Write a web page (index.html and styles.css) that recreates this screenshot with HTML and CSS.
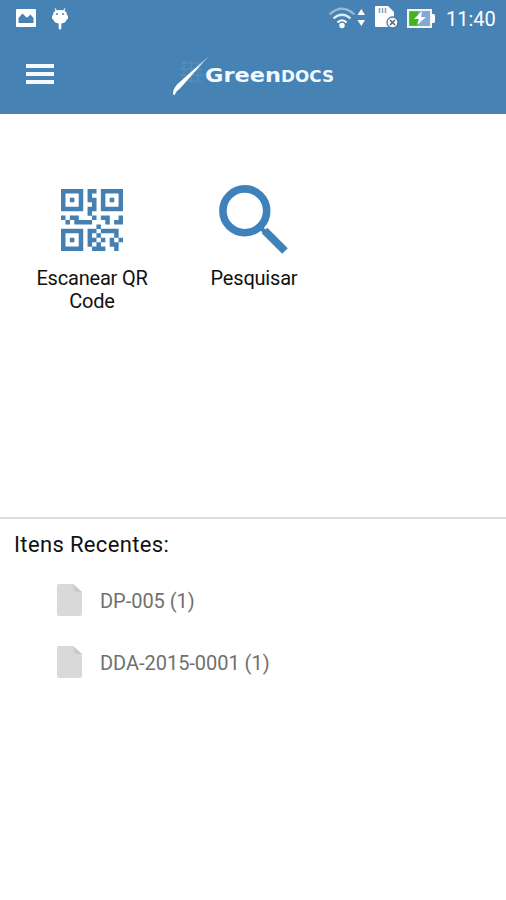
FILE: index.html
```html
<!DOCTYPE html>
<html lang="pt-BR">
<head>
    <meta charset="UTF-8">
    <meta name="viewport" content="width=device-width, initial-scale=1.0">
    <title>Greendocs</title>
    <link rel="stylesheet" href="styles.css">
</head>
<body>
    <header class="header">
        <div class="status-bar">
            <svg class="icon-picture" width="20" height="18" viewBox="0 0 20 18">
                <path fill="#fff" fill-rule="evenodd" d="M1 0H19Q20 0 20 1V17Q20 18 19 18H1Q0 18 0 17V1Q0 0 1 0ZM2.500 14H17.500V9L14.500 5.500L12.500 7.500L10.500 8.500L6.500 4.500L2.500 9Z"/>
            </svg>
            <svg class="icon-robot" width="16" height="22" viewBox="0 0 16 22">
                <path d="M3 0.500L5 4M13 0.500L11 4" stroke="#fff" stroke-width="1.200"/>
                <path fill="#fff" d="M1 7Q1 2 8 2T15 7L16 8V11H15Q14 15 9.300 15.500V20Q9.300 21.500 8 21.500T6.700 20V15.500Q2 15 1 11H0V8Z"/>
                <circle cx="5" cy="6" r="1" fill="#4682b4"/>
                <circle cx="11" cy="6" r="1" fill="#4682b4"/>
            </svg>
            <div class="status-right">
                <svg class="icon-wifi" width="38" height="22" viewBox="0 0 38 22">
                    <g fill="none" stroke="#fff" stroke-width="2.200">
                        <path d="M0.500 7.500Q13 -4 25.500 7.500" opacity="0.450"/>
                        <path d="M4.500 11.500Q13 4 21.500 11.500" opacity="0.850"/>
                        <path d="M8.500 15.500Q13 11 17.500 15.500"/>
                    </g>
                    <circle cx="13" cy="18.500" r="2.700" fill="#fff"/>
                    <path fill="#fff" d="M28.500 8L32.300 2L36 8ZM28.500 13H36L32.300 19Z"/>
                </svg>
                <svg class="icon-sd" width="24" height="23" viewBox="0 0 24 23">
                    <path fill="#fff" d="M1 0H13L19 6V21H1Q0 21 0 20V1Q0 0 1 0Z"/>
                    <path d="M4.500 2V7M7.500 2V7M10.500 2V7" stroke="#7fa4c4" stroke-width="1.500"/>
                    <circle cx="17.500" cy="16.500" r="5.500" fill="#fff" stroke="#4e7697" stroke-width="1.300"/>
                    <path d="M15 14L20 19M20 14L15 19" stroke="#476b89" stroke-width="1.500"/>
                </svg>
                <svg class="icon-battery" width="28" height="19" viewBox="0 0 28 19">
                    <rect x="1" y="1" width="23" height="17" fill="#82a9d2" stroke="#f4f4f0" stroke-width="2"/>
                    <rect x="2.500" y="2.500" width="8.500" height="14" fill="#43b31e"/>
                    <path fill="#fff" d="M24 5H26.500Q28 5 28 6.500V12.500Q28 14 26.500 14H24ZM15 2L7 10H12L10 16L19 8H14Z"/>
                </svg>
                <span class="clock">11:40</span>
            </div>
        </div>
        <div class="toolbar">
            <div class="menu"><span></span><span></span><span></span></div>
            <div class="logo">
                <svg width="42" height="42" viewBox="0 0 42 42">
                    <defs>
                        <linearGradient id="blade" x1="0" y1="1" x2="1" y2="0">
                            <stop offset="0.600" stop-color="#fff"/>
                            <stop offset="1" stop-color="#fff" stop-opacity="0.300"/>
                        </linearGradient>
                    </defs>
                    <path d="M10 9H30M8 15H30M8 21H30M12 27H30M12 7V29M19 7V29M26 7V29" stroke="#77a5ce" stroke-width="1" opacity="0.450"/>
                    <path fill="url(#blade)" d="M1 40.500Q0.500 36 5 30.500L38 1L20 21L8 34.500Q3 38 3 41Z"/>
                </svg>
                <svg class="logo-name" width="132" height="24" viewBox="0 0 132 24">
                    <text x="1" y="18" class="logo-text" textLength="76" lengthAdjust="spacingAndGlyphs">Green</text>
                    <text x="77" y="18" class="logo-text logo-caps" textLength="53" lengthAdjust="spacingAndGlyphs">DOCS</text>
                </svg>
            </div>
        </div>
    </header>

    <main class="actions">
        <div class="action">
            <svg id="qr" width="62" height="62" viewBox="0 0 14 14" fill="#4480b2"></svg>
            <p>Escanear QR<br>Code</p>
        </div>
        <div class="action">
            <svg class="icon-search" width="70" height="70" viewBox="0 0 70 70">
                <circle cx="25.800" cy="25.800" r="21.900" fill="none" stroke="#3f82bb" stroke-width="7.600"/>
                <path d="M45.500 45.500L66 66" stroke="#3f82bb" stroke-width="8"/>
                <path d="M40 41L46 47" stroke="#3f82bb" stroke-width="4"/>
            </svg>
            <p>Pesquisar</p>
        </div>
    </main>

    <section class="recent">
        <h2>Itens Recentes:</h2>
        <ul>
            <li>
                <svg width="25" height="32" viewBox="0 0 25 32">
                    <path fill="#d9d9d9" d="M2 0H16L25 8V30Q25 32 23 32H2Q0 32 0 30V2Q0 0 2 0Z"/>
                    <path fill="#cbcbcb" d="M16 0L17 6Q17 8 19 8H25Z"/>
                </svg>
                <span>DP-005 (1)</span>
            </li>
            <li>
                <svg width="25" height="32" viewBox="0 0 25 32">
                    <path fill="#d9d9d9" d="M2 0H16L25 8V30Q25 32 23 32H2Q0 32 0 30V2Q0 0 2 0Z"/>
                    <path fill="#cbcbcb" d="M16 0L17 6Q17 8 19 8H25Z"/>
                </svg>
                <span>DDA-2015-0001 (1)</span>
            </li>
        </ul>
    </section>

    <script>
        // QR code modules, one string per row
        var rows = [
            "#####.##.#####",
            "#...#.#..#...#",
            "#.#.#.##.#.#.#",
            "#...#..#.#...#",
            "#####.##.#####",
            "......#.......",
            "#.##...#.##..#",
            ".#.####...#.##",
            "........#.....",
            "#####.##.####.",
            "#...#.#.#...#.",
            "#.#.#.##.#.#.#",
            "#...#.#.#..##.",
            "#####..###..#."
        ];
        var path = "";
        for (var y = 0; y < rows.length; y++) {
            for (var x = 0; x < rows[y].length; x++) {
                if (rows[y][x] === "#") {
                    path += "M" + x + " " + y + "h1.02v1.02h-1.02z";
                }
            }
        }
        document.getElementById("qr").innerHTML = '<path d="' + path + '"/>';
    </script>
</body>
</html>
```

FILE: styles.css
```css
* {
    box-sizing: border-box;
}

body {
    margin: 0;
    height: 900px;
    background-color: #fff;
    color: #111;
    font-family: Roboto, sans-serif;
    display: flex;
    flex-direction: column;
    overflow: hidden;
}

svg {
    display: block;
    flex-shrink: 0;
}

.header {
    height: 114px;
    background-color: #4682b4;
    color: #fff;
}

.status-bar {
    display: flex;
    align-items: flex-start;
    height: 37px;
    padding: 0 10px 0 16px;
}

.icon-picture {
    margin-top: 9px;
}

.icon-robot {
    margin: 8px 0 0 16px;
}

.status-right {
    display: flex;
    margin-left: auto;
}

.icon-wifi {
    margin-top: 7px;
}

.icon-sd {
    margin: 6px 0 0 8px;
}

.icon-battery {
    margin: 9px 0 0 8px;
}

.clock {
    margin: 7px 0 0 11px;
    width: 50px;
    font-size: 20px;
    line-height: 24px;
    white-space: nowrap;
}

.toolbar {
    display: flex;
    align-items: flex-start;
    height: 77px;
    padding-left: 26px;
}

.menu {
    display: flex;
    flex-direction: column;
    gap: 4px;
    width: 28px;
    padding-top: 27px;
}

.menu span {
    height: 4px;
    background-color: #f4f9fd;
}

.logo {
    display: flex;
    margin: 17px 0 0 118px;
}

.logo-name {
    margin: 10px 0 0 -10px;
}

.logo-text {
    font-family: "DejaVu Sans", sans-serif;
    font-size: 19px;
    font-weight: bold;
    fill: #f0f9ff;
}

.logo-caps {
    font-size: 16px;
}

.actions {
    display: flex;
    height: 404px;
    padding: 71px 0 0 11px;
}

.action {
    display: flex;
    flex-direction: column;
    align-items: center;
    width: 162px;
}

.action p {
    margin: 13px 0 0;
    font-size: 20px;
    line-height: 23px;
    letter-spacing: -0.2px;
    text-align: center;
}

#qr {
    margin: 4px 0 3px;
}

.action .icon-search {
    margin-bottom: -1px;
}

.recent {
    border-top: 2px solid #dcdcdc;
    padding: 11px 14px 0;
    margin-top: -1px;
}

.recent h2 {
    margin: 0;
    font-size: 22px;
    line-height: 30px;
    font-weight: normal;
    letter-spacing: 0.35px;
}

.recent ul {
    margin: 10px 0 0;
    padding: 0 0 0 43px;
    list-style: none;
}

.recent li {
    display: flex;
    align-items: center;
    gap: 18px;
    height: 62px;
    padding-bottom: 3px;
    color: #707070;
    font-size: 20px;
}

.recent li span {
    padding-top: 3px;
    letter-spacing: -0.03px;
}
```
